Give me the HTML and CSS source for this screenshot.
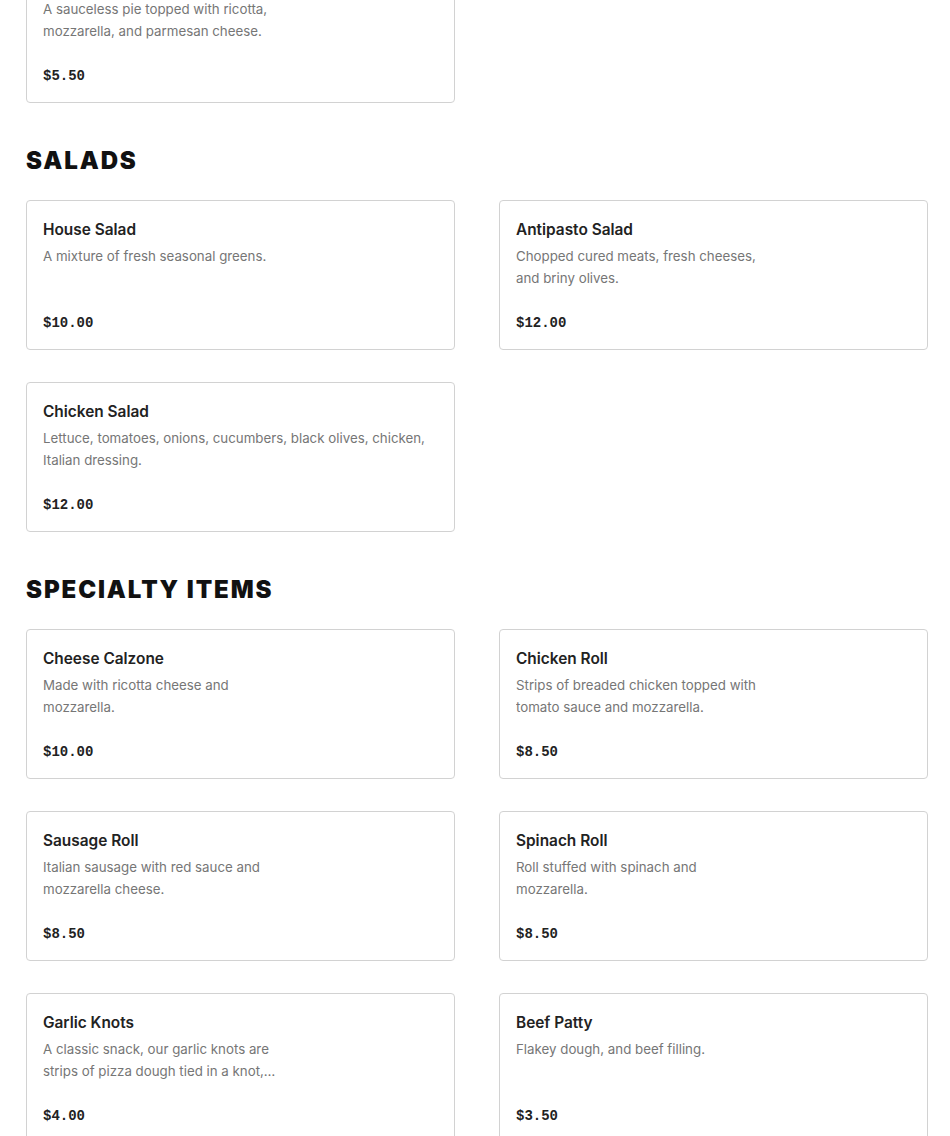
FILE: index.html
```html
<!DOCTYPE html>
<html lang="en">
<head>
<meta charset="utf-8">
<title>Menu</title>
<link rel="stylesheet" href="styles.css">
</head>
<body>
<main class="menu">
  <section class="section section--first">
    <div class="grid">
      <article class="card">
        <h3 class="card-title">White Pie</h3>
        <p class="card-desc">A sauceless pie topped with ricotta, mozzarella, and parmesan cheese.</p>
        <p class="card-price">$5.50</p>
      </article>
    </div>
  </section>

  <section class="section">
    <h2 class="section-title">SALADS</h2>
    <div class="grid">
      <article class="card">
        <h3 class="card-title">House Salad</h3>
        <p class="card-desc">A mixture of fresh seasonal greens.</p>
        <p class="card-price">$10.00</p>
      </article>
      <article class="card">
        <h3 class="card-title">Antipasto Salad</h3>
        <p class="card-desc">Chopped cured meats, fresh cheeses, and briny olives.</p>
        <p class="card-price">$12.00</p>
      </article>
      <article class="card">
        <h3 class="card-title">Chicken Salad</h3>
        <p class="card-desc card-desc--wide">Lettuce, tomatoes, onions, cucumbers, black olives, chicken, Italian dressing.</p>
        <p class="card-price">$12.00</p>
      </article>
    </div>
  </section>

  <section class="section">
    <h2 class="section-title">SPECIALTY ITEMS</h2>
    <div class="grid">
      <article class="card">
        <h3 class="card-title">Cheese Calzone</h3>
        <p class="card-desc">Made with ricotta cheese and mozzarella.</p>
        <p class="card-price">$10.00</p>
      </article>
      <article class="card">
        <h3 class="card-title">Chicken Roll</h3>
        <p class="card-desc">Strips of breaded chicken topped with tomato sauce and mozzarella.</p>
        <p class="card-price">$8.50</p>
      </article>
      <article class="card">
        <h3 class="card-title">Sausage Roll</h3>
        <p class="card-desc">Italian sausage with red sauce and mozzarella cheese.</p>
        <p class="card-price">$8.50</p>
      </article>
      <article class="card">
        <h3 class="card-title">Spinach Roll</h3>
        <p class="card-desc">Roll stuffed with spinach and mozzarella.</p>
        <p class="card-price">$8.50</p>
      </article>
      <article class="card">
        <h3 class="card-title">Garlic Knots</h3>
        <p class="card-desc">A classic snack, our garlic knots are strips of pizza dough tied in a knot, baked and brushed with garlic butter.</p>
        <p class="card-price">$4.00</p>
      </article>
      <article class="card">
        <h3 class="card-title">Beef Patty</h3>
        <p class="card-desc">Flakey dough, and beef filling.</p>
        <p class="card-price">$3.50</p>
      </article>
    </div>
  </section>
</main>
</body>
</html>
```

FILE: styles.css
```css
* { box-sizing: border-box; }

html, body {
  margin: 0;
  padding: 0;
  background: #ffffff;
}

body {
  font-family: Inter, "Noto Sans", "Liberation Sans", sans-serif;
  color: #1f1f1f;
}

.menu {
  width: 902px;
  margin-left: 26px;
  margin-top: -47px;
}

.section-title {
  margin: 42px 0 23px;
  font-family: Inter, "Liberation Sans", sans-serif;
  font-weight: 900;
  font-size: 24px;
  line-height: 32px;
  letter-spacing: 1.9px;
  color: #111111;
}

.grid {
  display: grid;
  grid-template-columns: 1fr 1fr;
  column-gap: 44px;
  row-gap: 32px;
}

.card {
  border: 1px solid #d2d2d2;
  border-radius: 4px;
  padding: 17px 16px 15px;
  background: #ffffff;
}

.card-title {
  margin: 0;
  font-size: 15.4px;
  line-height: 24px;
  font-weight: 600;
  color: #222222;
}

.card-desc {
  margin: 3px 0 0;
  max-width: 250px;
  min-height: 44px;
  font-size: 13.3px;
  line-height: 22px;
  color: #767676;
  display: -webkit-box;
  -webkit-line-clamp: 2;
  -webkit-box-orient: vertical;
  overflow: hidden;
}

.card-desc--wide {
  max-width: none;
}

.card-price {
  margin: 23px 0 0;
  font-family: "Liberation Mono", "DejaVu Sans Mono", monospace;
  font-weight: 700;
  font-size: 14px;
  line-height: 22px;
  color: #222222;
}
```
